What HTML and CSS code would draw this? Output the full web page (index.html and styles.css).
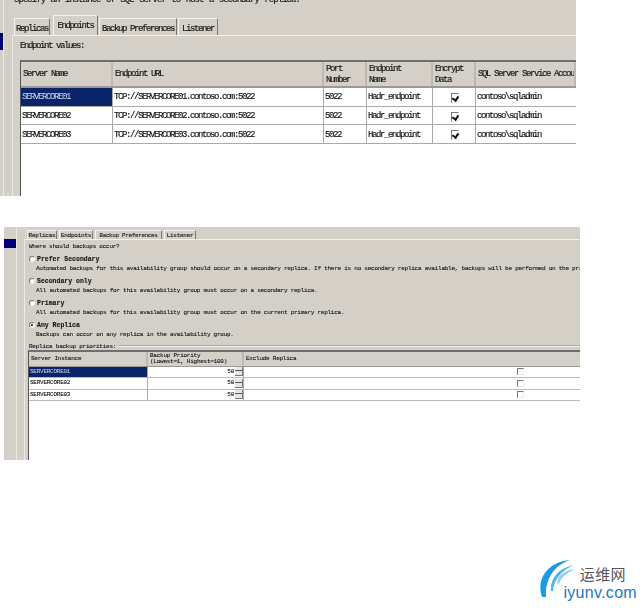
FILE: index.html
```html
<!DOCTYPE html>
<html lang="en">
<head>
<meta charset="utf-8">
<title>Availability group wizard</title>
<link rel="stylesheet" href="styles.css">
</head>
<body>
<section class="shot shot-a">
  <div class="rail"><div class="rail-fill"><i class="marker"></i></div><div class="rail-rest"></div></div>
  <div class="main">
    <p class="intro">Specify an instance of SQL Server to host a secondary replica.</p>
    <div class="tabs">
      <span class="tab t-a1">Replicas</span>
      <span class="tab active t-a2">Endpoints</span>
      <span class="tab t-a3">Backup Preferences</span>
      <span class="tab t-a4">Listener</span>
    </div>
    <div class="page">
      <p class="label">Endpoint values:</p>
      <div class="table">
        <div class="row head">
          <div class="cell">Server Name</div><div class="cell">Endpoint URL</div><div class="cell two">Port<br>Number</div><div class="cell two">Endpoint<br>Name</div><div class="cell two">Encrypt<br>Data</div><div class="cell last">SQL Server Service Account</div>
        </div>
        <div class="row">
          <div class="cell sel">SERVERCORE01</div><div class="cell">TCP://SERVERCORE01.contoso.com:5022</div><div class="cell">5022</div><div class="cell">Hadr_endpoint</div><div class="cell mid"><span class="check on"></span></div><div class="cell last">contoso\sqladmin</div>
        </div>
        <div class="row">
          <div class="cell">SERVERCORE02</div><div class="cell">TCP://SERVERCORE02.contoso.com:5022</div><div class="cell">5022</div><div class="cell">Hadr_endpoint</div><div class="cell mid"><span class="check on"></span></div><div class="cell last">contoso\sqladmin</div>
        </div>
        <div class="row">
          <div class="cell">SERVERCORE03</div><div class="cell">TCP://SERVERCORE03.contoso.com:5022</div><div class="cell">5022</div><div class="cell">Hadr_endpoint</div><div class="cell mid"><span class="check on"></span></div><div class="cell last">contoso\sqladmin</div>
        </div>
      </div>
    </div>
  </div>
</section>

<section class="shot shot-b">
  <div class="rail"><div class="rail-fill"><i class="marker"></i></div><div class="rail-rest"></div></div>
  <div class="main">
    <div class="tabs">
      <span class="tab t-b1">Replicas</span>
      <span class="tab t-b2">Endpoints</span>
      <span class="tab active t-b3">Backup Preferences</span>
      <span class="tab t-b4">Listener</span>
    </div>
    <div class="page">
      <p class="label">Where should backups occur?</p>
      <div class="option"><span class="radio"></span><div><p class="opt-title">Prefer Secondary</p><p class="opt-desc">Automated backups for this availability group should occur on a secondary replica. If there is no secondary replica available, backups will be performed on the primary replica.</p></div></div>
      <div class="option"><span class="radio"></span><div><p class="opt-title">Secondary only</p><p class="opt-desc">All automated backups for this availability group must occur on a secondary replica.</p></div></div>
      <div class="option"><span class="radio"></span><div><p class="opt-title">Primary</p><p class="opt-desc">All automated backups for this availability group must occur on the current primary replica.</p></div></div>
      <div class="option"><span class="radio on"></span><div><p class="opt-title">Any Replica</p><p class="opt-desc">Backups can occur on any replica in the availability group.</p></div></div>
      <div class="legend"><span>Replica backup priorities:</span><i></i></div>
      <div class="table">
        <div class="row head">
          <div class="cell">Server Instance</div><div class="cell two">Backup Priority<br>(Lowest=1, Highest=100)</div><div class="cell">Exclude Replica</div>
        </div>
        <div class="row">
          <div class="cell sel">SERVERCORE01</div><div class="cell spin-cell">50<span class="spin"></span></div><div class="cell check-cell"><span class="check"></span></div>
        </div>
        <div class="row">
          <div class="cell">SERVERCORE02</div><div class="cell spin-cell">50<span class="spin"></span></div><div class="cell check-cell"><span class="check"></span></div>
        </div>
        <div class="row">
          <div class="cell">SERVERCORE03</div><div class="cell spin-cell">50<span class="spin"></span></div><div class="cell check-cell"><span class="check"></span></div>
        </div>
      </div>
    </div>
  </div>
</section>

<footer class="logo">
  <svg class="logo-mark" viewBox="0 0 40 38" width="40" height="38" aria-hidden="true">
    <path d="M3 37C-3 20 8 2 31 0C16 5 6 18 7 37Z" fill="#1c9be0"/>
    <path d="M12 31C11 18 20 8 35 5C24 10 15 18 14 31Z" fill="#4fb6ea"/>
    <path d="M18 23C19 15 26 10 36 9C28 13 22 17 20 24Z" fill="#8fd2f2"/>
  </svg>
  <div class="logo-text"><span class="logo-cn">运维网</span><span class="logo-en">iyunv.com</span></div>
</footer>
</body>
</html>
```

FILE: styles.css
```css
* { box-sizing: border-box; }
html, body { margin: 0; padding: 0; background: #fff; }
body { width: 642px; height: 611px; overflow: hidden; font-family: "Liberation Mono", "DejaVu Sans Mono", monospace; color: #111; }
p { margin: 0; }

.shot { display: flex; width: 576px; overflow: hidden; background: #d4d0c8; filter: blur(0.35px); white-space: nowrap; }
.shot-a { height: 196px; font-size: 9px; letter-spacing: -1.4px; -webkit-text-stroke: 0.15px #111; }
.shot-b { height: 233px; margin: 31px 0 0 4px; font-size: 6px; letter-spacing: -0.25px; -webkit-text-stroke: 0.1px #111; }

/* left rail */
.rail { display: flex; flex: none; }
.shot-a .rail { width: 12px; }
.shot-b .rail { width: 20px; }
.rail-fill { flex: none; border-right: 1px solid #ece9e2; }
.shot-a .rail-fill { width: 4px; padding-top: 33px; }
.shot-b .rail-fill { width: 13px; padding-top: 12px; }
.marker { display: block; background: #00007f; }
.shot-a .marker { height: 17px; width: 3px; }
.shot-b .marker { height: 9px; width: 12px; }
.rail-rest { flex: 1; }

.main { flex: 1; min-width: 0; display: flex; flex-direction: column; }
.intro { flex: none; height: 20px; margin-top: -5px; padding-left: 2px; font-size: 9px; letter-spacing: -0.95px; word-spacing: 1px; }

/* tabs */
.tabs { display: flex; flex: none; align-items: flex-end; }
.shot-a .tabs { height: 20px; gap: 1px; padding-left: 2px; }
.shot-b .tabs { height: 12px; padding-top: 3px; padding-left: 3px; gap: 2px; }
.tab { display: flex; align-items: center; justify-content: center; border-right: 1px solid #777; border-left: 1px solid #f4f2ee; border-top: 1px solid #f4f2ee; }
.shot-a .tab { height: 17px; padding-top: 3px; }
.shot-a .tab.active { height: 20px; padding-top: 0; }
.shot-b .tab { height: 9px; }
.t-a1 { width: 36px; } .t-a2 { width: 45px; margin-left: 2px; } .t-a3 { width: 78px; } .t-a4 { width: 40px; }
.t-b1 { width: 30px; } .t-b2 { width: 34px; } .t-b3 { width: 67px; font-size: 5.8px; } .t-b4 { width: 32px; }

/* page */
.page { flex: 1; border-top: 1px solid #f4f2ee; border-left: 1px solid #ece9e2; min-height: 0; display: flex; flex-direction: column; }
.shot-a .page { padding: 5px 0 0 7px; }
.shot-b .page { padding: 2px 0 0 3px; }
.label { height: 11px; line-height: 11px; }
.shot-a .label { flex: none; margin-left: 0; height: 19px; }

/* options */
.shot-b .label { flex: none; height: 9px; line-height: 9px; margin-bottom: 4px; margin-left: 1px; }
.option { display: flex; flex: none; gap: 2px; height: 22px; margin-left: 1px; }
.radio { flex: none; width: 6px; height: 6px; margin-top: 1px; border: 1px solid #777; border-right-color: #eee; border-bottom-color: #eee; border-radius: 50%; background: #fff; position: relative; }
.radio.on::after { content: ""; position: absolute; inset: 1px; border-radius: 50%; background: #111; }
.opt-title { font-weight: 700; font-size: 6.5px; letter-spacing: 0; height: 9px; line-height: 9px; }
.opt-desc { margin-left: -1px; line-height: 9px; }
.legend { display: flex; flex: none; align-items: center; gap: 3px; height: 8px; margin: -1px 0 0 1px; }
.legend i { flex: 1; height: 2px; border-top: 1px solid #aaa; border-bottom: 1px solid #f2f0ea; }

/* tables */
.table { flex: 1; min-height: 0; background: #fff; border-top: 2px solid #6e6e6e; border-left: 1px solid #555; }
.row { display: grid; }
.shot-a .row { grid-template-columns: 92px 211px 43px 66px 43px 1fr; height: 18.7px; border-bottom: 1px solid #aaa; }
.shot-a .row:not(.head) .cell { padding-top: 2px; }
.shot-a .row.head { height: 26px; border-bottom: 2px solid #999; }
.shot-b .row { grid-template-columns: 119px 96px 1fr; height: 11.6px; border-bottom: 1px solid #bbb; }
.shot-b .row.head { height: 14.5px; border-bottom: 1px solid #999; }
.cell { display: flex; align-items: center; padding-left: 1px; border-right: 1px solid #aaa; overflow: hidden; min-width: 0; line-height: 1; }
.cell.last { border-right: 0; }
.shot-b .row > .cell:last-child { border-right: 0; }
.head .cell { background: #d4d0c8; padding-left: 2px; border-right: 2px solid #bdb9b0; }
.cell.two { line-height: 11px; display: block; padding-top: 2px; }
.shot-b .cell.two { line-height: 6px; padding-top: 1px; }
.cell.sel { background: #0a246a; color: #cfd8f5; -webkit-text-stroke: 0; }
.cell.mid { justify-content: center; }
.spin-cell { justify-content: flex-end; padding-right: 0; }
.spin { width: 8px; height: 9px; margin-left: 1px; background: linear-gradient(#e8e6e0 0 40%, #555 40% 55%, #e8e6e0 55%); border-right: 1px solid #777; border-bottom: 1px solid #777; }
.check-cell { padding-left: 273px; }

/* checks */
.check { display: block; width: 7px; height: 7px; border: 1px solid #777; border-right-color: #eee; border-bottom-color: #eee; background: #fff; position: relative; }
.shot-a .check { width: 8px; height: 10px; }
.check.on::after { content: ""; position: absolute; left: 1px; top: 1px; width: 3px; height: 4px; border: solid #111; border-width: 0 2px 2px 0; transform: rotate(35deg); }

/* logo */
.logo { display: flex; justify-content: flex-end; align-items: flex-end; margin: 100px 5px 0 0; }
.logo-mark { flex: none; margin: 0 -16px 3px 0; }
.logo-text { display: flex; flex-direction: column; align-items: flex-end; }
.logo-cn { font-family: "Noto Sans CJK SC", sans-serif; font-size: 15px; line-height: 20px; letter-spacing: 0.4px; color: #555; margin-right: 11px; }
.logo-en { font-family: "Liberation Sans", sans-serif; font-size: 16px; line-height: 17px; color: #1b78bd; letter-spacing: 0.3px; }
```
